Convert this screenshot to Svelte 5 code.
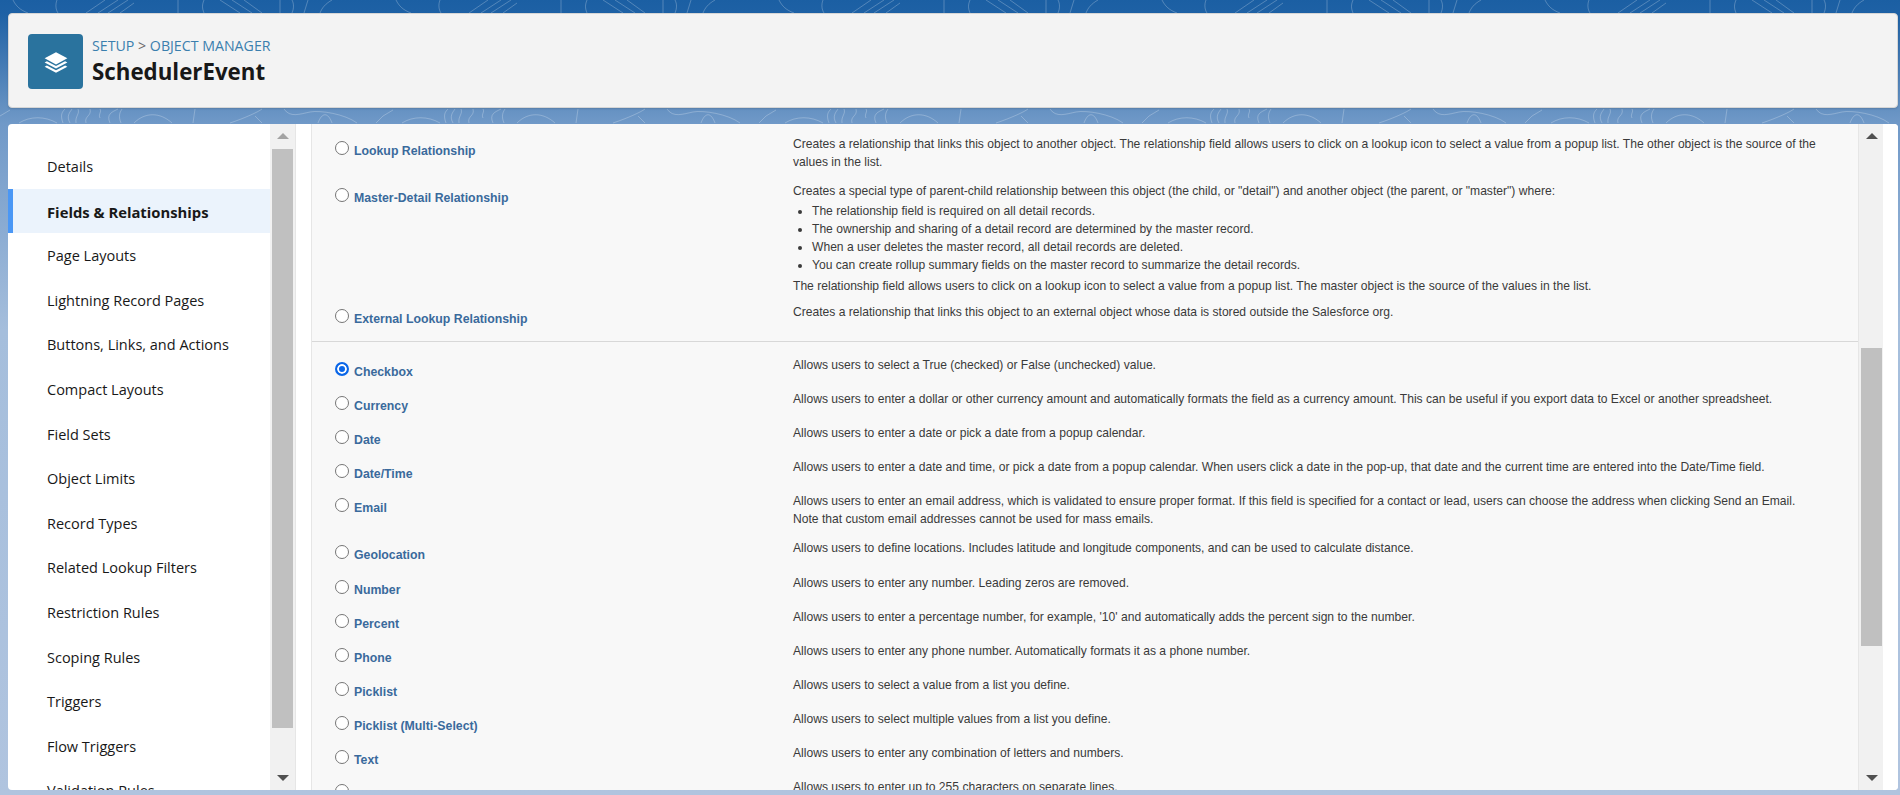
<script>
  const nav = ['Details','Fields & Relationships','Page Layouts','Lightning Record Pages','Buttons, Links, and Actions','Compact Layouts','Field Sets','Object Limits','Record Types','Related Lookup Filters','Restriction Rules','Scoping Rules','Triggers','Flow Triggers','Validation Rules'];
  const fields = [
    ['Checkbox','Allows users to select a True (checked) or False (unchecked) value.'],
    ['Currency','Allows users to enter a dollar or other currency amount and automatically formats the field as a currency amount. This can be useful if you export data to Excel or another spreadsheet.'],
    ['Date','Allows users to enter a date or pick a date from a popup calendar.'],
    ['Date/Time','Allows users to enter a date and time, or pick a date from a popup calendar. When users click a date in the pop-up, that date and the current time are entered into the Date/Time field.'],
    ['Email','Allows users to enter an email address, which is validated to ensure proper format. If this field is specified for a contact or lead, users can choose the address when clicking Send an Email. Note that custom email addresses cannot be used for mass emails.'],
    ['Geolocation','Allows users to define locations. Includes latitude and longitude components, and can be used to calculate distance.'],
    ['Number','Allows users to enter any number. Leading zeros are removed.'],
    ['Percent',"Allows users to enter a percentage number, for example, '10' and automatically adds the percent sign to the number."],
    ['Phone','Allows users to enter any phone number. Automatically formats it as a phone number.'],
    ['Picklist','Allows users to select a value from a list you define.'],
    ['Picklist (Multi-Select)','Allows users to select multiple values from a list you define.'],
    ['Text','Allows users to enter any combination of letters and numbers.'],
    ['','Allows users to enter up to 255 characters on separate lines.']
  ];
</script>

<div class="page">
  <svg class="topo" width="1900" height="795" aria-hidden="true">
    <defs>
      <pattern id="topo" x="0" y="0" width="383" height="795" patternUnits="userSpaceOnUse">
        <g fill="none" stroke="#fff" stroke-opacity=".24" stroke-width="1">
          <path d="M13 0C16 6 20 10 28 13M57 0C55 5 56 10 58 13M86 13 105 0M98 13 118 0M108 13 128 0M120 13 134 3M178 0V13M204 0C202 5 202 8 204 13M220 0 240 13M232 0 252 13M244 0 262 13M280 13V0M292 13C294 8 294 4 292 0M304 13 308 0M332 0C325 4 322 8 320 13"/>
          <path d="M134 123C145 112 160 112 172 123M195 109 193 123M230 123C245 118 258 112 262 109M255 116 262 123M284 109C290 118 300 114 310 112S345 114 357 123M318 123C322 112 328 112 332 123M376 123 383 116M0 116 10 110M19 123C30 116 45 116 57 123M63 123C60 115 62 112 65 109M70 123C66 116 70 112 72 109M76 123C75 116 80 114 78 109M86 123C84 116 92 116 90 109M100 118C98 114 102 112 100 109M110 123C106 114 112 112 118 109M121 123C118 116 120 112 122 109"/>
        </g>
      </pattern>
    </defs>
    <rect width="1900" height="795" fill="url(#topo)" />
  </svg>

  <header class="head">
    <div class="logo">
      <svg viewBox="0 0 24 24" width="26" height="26" fill="#fff" aria-hidden="true">
        <path d="M12 3 1.5 8.6 12 14.2 22.5 8.6Z"/>
        <path d="M3.6 11.3 1.5 12.5 12 18.1 22.5 12.5 20.4 11.3 12 15.8Z"/>
        <path d="M3.6 15.2 1.5 16.4 12 22 22.5 16.4 20.4 15.2 12 19.7Z"/>
      </svg>
    </div>
    <div class="titles">
      <div class="crumb">SETUP <span class="sep">&gt;</span> OBJECT MANAGER</div>
      <h1>SchedulerEvent</h1>
    </div>
  </header>

  <main class="card">
    <aside class="side">
      <ul class="nav">
        {#each nav as item, i}
          <li class:active={i === 1}>{item}</li>
        {/each}
      </ul>
      <div class="sb sb-left">
        <span class="up"></span>
        <span class="thumb"></span>
        <span class="down"></span>
      </div>
    </aside>
    <div class="gutter"></div>
    <section class="content">
      <div class="group first">
        <div class="row">
          <div class="name"><span class="radio"></span><span class="label">Lookup Relationship</span></div>
          <div class="desc">Creates a relationship that links this object to another object. The relationship field allows users to click on a lookup icon to select a value from a popup list. The other object is the source of the values in the list.</div>
        </div>
        <div class="row">
          <div class="name"><span class="radio"></span><span class="label">Master-Detail Relationship</span></div>
          <div class="desc master">
            Creates a special type of parent-child relationship between this object (the child, or "detail") and another object (the parent, or "master") where:
            <ul>
              <li>The relationship field is required on all detail records.</li>
              <li>The ownership and sharing of a detail record are determined by the master record.</li>
              <li>When a user deletes the master record, all detail records are deleted.</li>
              <li>You can create rollup summary fields on the master record to summarize the detail records.</li>
            </ul>
            The relationship field allows users to click on a lookup icon to select a value from a popup list. The master object is the source of the values in the list.
          </div>
        </div>
        <div class="row">
          <div class="name"><span class="radio"></span><span class="label">External Lookup Relationship</span></div>
          <div class="desc">Creates a relationship that links this object to an external object whose data is stored outside the Salesforce org.</div>
        </div>
      </div>
      <div class="group">
        {#each fields as f, i}
          <div class="row">
            <div class="name"><span class="radio" class:on={i === 0}></span><span class="label">{f[0]}</span></div>
            <div class="desc">{f[1]}</div>
          </div>
        {/each}
      </div>
    </section>
    <div class="sb sb-right">
      <span class="up dark"></span>
      <span class="thumb"></span>
      <span class="down dark"></span>
    </div>
    <div class="edge"></div>
  </main>
</div>

<style>
  :global(body) { margin: 0; overflow: hidden; }
  .page {
    position: relative;
    width: 1900px;
    height: 795px;
    overflow: hidden;
    box-sizing: border-box;
    padding: 13px 2px 0 8px;
    display: flex;
    flex-direction: column;
    gap: 16px;
    background: linear-gradient(180deg, #1b5fa3 0, #1e61a5 14px, #6591c2 108px, #7099c8 124px, #a5bedc 330px, #b0c4df 795px);
    font-family: "Liberation Sans", Arial, sans-serif;
  }
  .topo { position: absolute; left: 0; top: 0; }
  .head {
    position: relative;
    height: 95px;
    flex: none;
    box-sizing: border-box;
    display: flex;
    align-items: center;
    gap: 9px;
    padding: 2px 19px 0;
    background: #f3f3f3;
    border: 1px solid #d6d6d6;
    border-radius: 4px;
    box-shadow: 0 1px 2px rgba(0,0,0,.14);
  }
  .logo {
    width: 55px;
    height: 55px;
    border-radius: 4px;
    background: #2a739e;
    display: flex;
    align-items: center;
    justify-content: center;
  }
  .titles { font-family: "Open Sans", "Noto Sans", sans-serif; }
  .crumb { font-size: 14.2px; line-height: 18px; color: #3b7fae; }
  .sep { color: #6a6a6a; }
  h1 { margin: 2px 0 0; font-size: 22.3px; line-height: 30px; font-weight: 700; color: #181818; }

  .card {
    position: relative;
    height: 666px;
    flex: none;
    display: flex;
    background: #fff;
    border-radius: 4px;
    overflow: hidden;
  }
  .side { width: 287px; flex: none; display: flex; }
  .nav {
    flex: 1;
    margin: 0;
    padding: 20px 0 0;
    list-style: none;
    height: 646px;
    overflow: hidden;
    font-family: "Open Sans", "Noto Sans", sans-serif;
    font-size: 14.5px;
    color: #181818;
  }
  .nav li { height: 44.6px; line-height: 42.6px; padding: 2px 0 0 39px; box-sizing: border-box; }
  .nav li.active { background: #ebf3fc; border-left: 5px solid #4a97f5; padding-left: 34px; font-weight: 700; font-size: 14.8px; }
  .sb { width: 25px; flex: none; background: #f1f1f1; position: relative; }
  .sb-left { height: 666px; }
  .sb .thumb { position: absolute; left: 2px; width: 21px; background: #c0c0c0; }
  .sb-left .thumb { top: 25px; height: 579px; }
  .sb-right .thumb { top: 224px; height: 298px; }
  .up, .down { position: absolute; left: 7px; width: 0; height: 0; border-left: 6px solid transparent; border-right: 6px solid transparent; }
  .up { top: 9px; border-bottom: 6px solid #a3a3a3; }
  .down { bottom: 9px; border-top: 6px solid #505050; }
  .up.dark { border-bottom-color: #505050; }
  .gutter { width: 17px; flex: none; background: #fff; border-left: 1px solid #e6e6e6; border-right: 1px solid #e6e6e6; box-sizing: border-box; }
  .content {
    flex: 1;
    min-width: 0;
    height: 666px;
    overflow: hidden;
    background: #f8f8f8;
    font-size: 12.1px;
    line-height: 18px;
    color: #3a3a3a;
  }
  .group { padding-top: 14px; }
  .group.first { padding-top: 11px; padding-bottom: 4px; border-bottom: 1px solid #d8d8d8; }
  .row { display: grid; grid-template-columns: 481px 1fr; min-height: 34.1px; box-sizing: border-box; }
  .row .name { display: flex; align-items: flex-start; padding-left: 23px; padding-top: 6px; }
  .radio {
    width: 14px;
    height: 14px;
    flex: none;
    box-sizing: border-box;
    border: 1px solid #767676;
    border-radius: 50%;
    background: #fff;
  }
  .radio.on { border: 2px solid #0a66e8; background: #0a66e8; box-shadow: inset 0 0 0 2px #fff; }
  .label { margin-left: 5px; margin-top: 1px; font-size: 12.3px; font-weight: 700; color: #3a6a9c; line-height: 18px; }
  .desc { max-width: 1028px; padding-bottom: 11px; }
  .desc.master { padding-bottom: 8px; }
  .desc ul { margin: 2px 0 3px; padding: 0 0 0 19px; }
  .sb-right { height: 666px; border-left: 1px solid #e6e6e6; box-sizing: border-box; }
  .edge { width: 15px; flex: none; background: #fff; }
</style>
